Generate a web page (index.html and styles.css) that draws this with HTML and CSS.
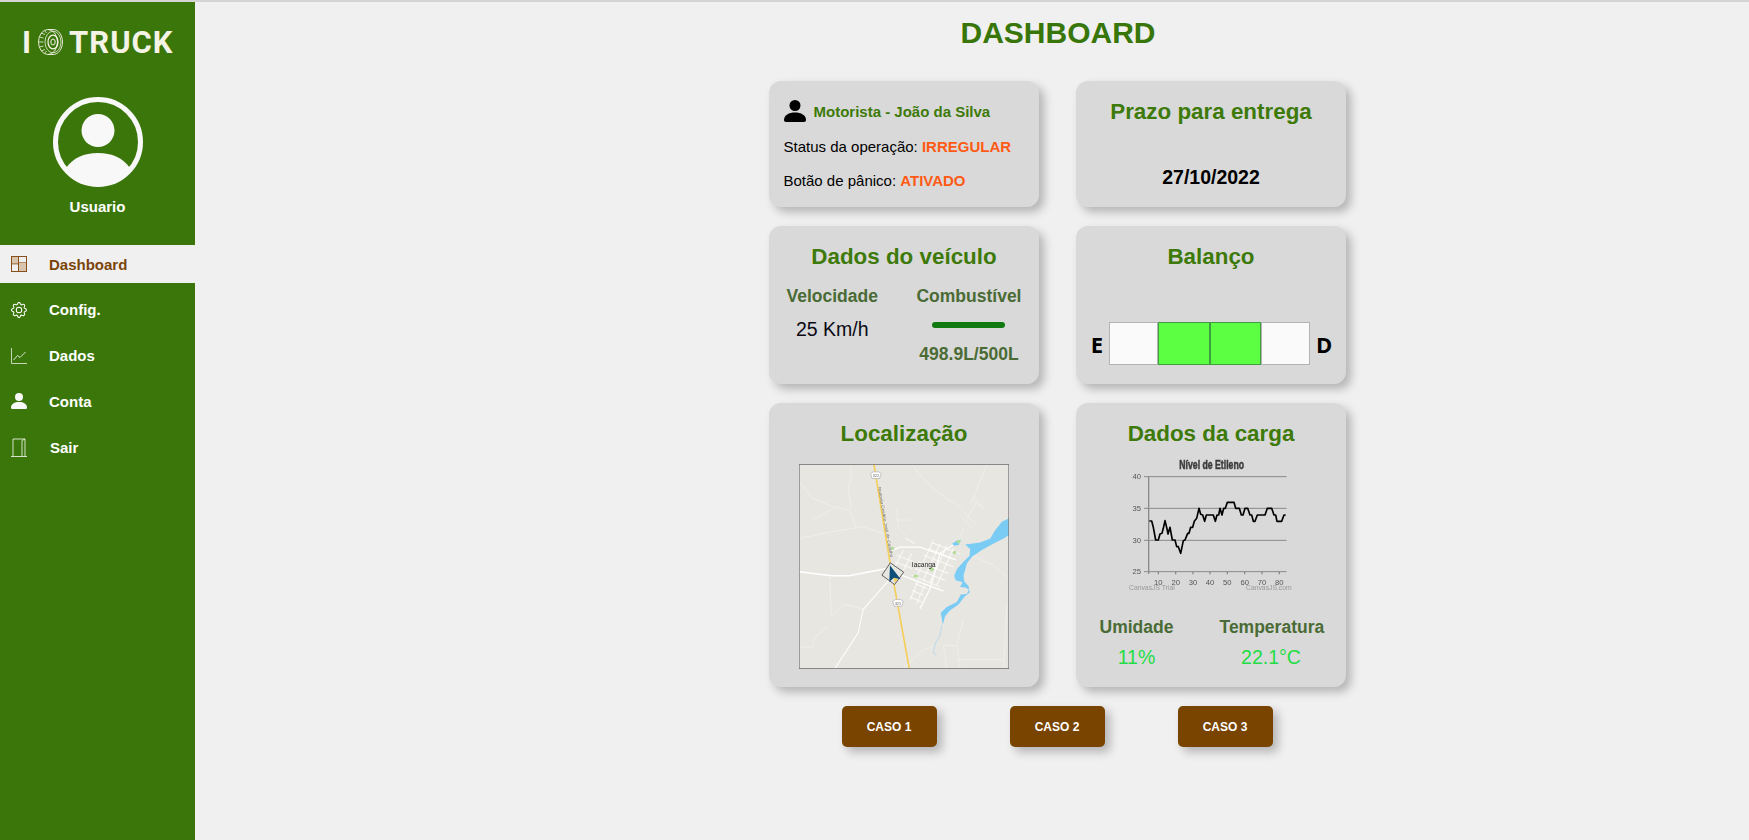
FILE: index.html
```html
<!DOCTYPE html>
<html lang="pt-BR">
<head>
    <meta charset="UTF-8">
    <meta name="viewport" content="width=device-width, initial-scale=1.0">
    <title>IoTruck Dashboard</title>
    <link rel="stylesheet" href="styles.css">
</head>
<body>

    <aside class="sidebar">
        <div class="logo">
            <span>I</span>
            <svg class="logo-tire" viewBox="0 0 25 26" fill="none" stroke="#f5f3e6">
                <ellipse cx="10" cy="13" rx="9.500" ry="12.500" stroke-width=".9"/>
                <path d="M10 .5h5c5.500 0 9.500 5.600 9.500 12.500S20.500 25.500 15 25.500h-5" stroke-width=".9"/>
                <ellipse cx="15" cy="13" rx="8" ry="10.800" stroke-width=".8"/>
                <ellipse cx="15" cy="13" rx="5" ry="6.800" stroke-width="1.300"/>
                <ellipse cx="15" cy="13" rx="2.200" ry="3" stroke-width="1"/>
                <path d="M3 4l4 1.500M1.500 8l4 1M1 13h4.500M1.500 18l4-1M3 22l4-1.500M6.500 1.500l2 2.500M6.500 24.500l2-2.500" stroke-width=".8"/>
            </svg>
            <span class="logo-name">TRUCK</span>
        </div>

        <svg class="avatar" viewBox="0 0 90 90">
            <circle cx="45" cy="45" r="42.500" fill="none" stroke="#f8f8f8" stroke-width="5"/>
            <circle cx="45" cy="33.500" r="16.500" fill="#f8f8f8"/>
            <path d="M13 71c7-10 18-15 32-15s25 5 32 15A42 42 0 0 1 13 71z" fill="#f8f8f8"/>
        </svg>
        <div class="user-name">Usuario</div>

        <nav class="menu">
            <a class="menu-item active">
                <svg class="menu-icon" viewBox="0 0 16 16">
                    <rect x=".5" y=".5" width="15" height="15" fill="#d9c5ad" stroke="#85501c"/>
                    <path d="M7.500 1v14M1 8h6.500M7.500 6H15" stroke="#85501c" fill="none"/>
                    <path d="M8 1h7v5H8zM1 8.500h6V15H1z" fill="#f0f0f0"/>
                </svg>
                <span>Dashboard</span>
            </a>
            <a class="menu-item">
                <svg class="menu-icon" viewBox="0 0 16 16" fill="#fff">
                    <path d="M8 4.754a3.246 3.246 0 1 0 0 6.492 3.246 3.246 0 0 0 0-6.492zM5.754 8a2.246 2.246 0 1 1 4.492 0 2.246 2.246 0 0 1-4.492 0z"/>
                    <path d="M9.796 1.343c-.527-1.79-3.065-1.79-3.592 0l-.094.319a.873.873 0 0 1-1.255.52l-.292-.16c-1.64-.892-3.433.902-2.54 2.541l.159.292a.873.873 0 0 1-.52 1.255l-.319.094c-1.79.527-1.79 3.065 0 3.592l.319.094a.873.873 0 0 1 .52 1.255l-.16.292c-.892 1.64.901 3.434 2.541 2.54l.292-.159a.873.873 0 0 1 1.255.52l.094.319c.527 1.79 3.065 1.79 3.592 0l.094-.319a.873.873 0 0 1 1.255-.52l.292.16c1.64.893 3.434-.902 2.54-2.541l-.159-.292a.873.873 0 0 1 .52-1.255l.319-.094c1.79-.527 1.79-3.065 0-3.592l-.319-.094a.873.873 0 0 1-.52-1.255l.16-.292c.893-1.64-.902-3.433-2.541-2.54l-.292.159a.873.873 0 0 1-1.255-.52l-.094-.319zm-2.633.283c.246-.835 1.428-.835 1.674 0l.094.319a1.873 1.873 0 0 0 2.693 1.115l.291-.16c.764-.415 1.6.42 1.184 1.185l-.159.292a1.873 1.873 0 0 0 1.116 2.692l.318.094c.835.246.835 1.428 0 1.674l-.319.094a1.873 1.873 0 0 0-1.115 2.693l.16.291c.415.764-.42 1.6-1.185 1.184l-.291-.159a1.873 1.873 0 0 0-2.693 1.116l-.094.318c-.246.835-1.428.835-1.674 0l-.094-.319a1.873 1.873 0 0 0-2.692-1.115l-.292.16c-.764.415-1.6-.42-1.184-1.185l.159-.291A1.873 1.873 0 0 0 1.945 8.93l-.319-.094c-.835-.246-.835-1.428 0-1.674l.319-.094A1.873 1.873 0 0 0 3.06 4.377l-.16-.292c-.415-.764.42-1.6 1.185-1.184l.292.159a1.873 1.873 0 0 0 2.692-1.115l.094-.319z"/>
                </svg>
                <span>Config.</span>
            </a>
            <a class="menu-item">
                <svg class="menu-icon" viewBox="0 0 16 16" fill="none" stroke="#e8efe0" stroke-width=".8">
                    <path d="M.5 0v15.500H16"/>
                    <path d="M2.500 12l4-4.500 2.500 2 5.500-5.500" stroke="#fff"/>
                </svg>
                <span>Dados</span>
            </a>
            <a class="menu-item">
                <svg class="menu-icon" viewBox="0 0 16 16" fill="#f8f8f8">
                    <circle cx="8" cy="4" r="4"/>
                    <path d="M0 14.500c0-3.500 3.500-5.500 8-5.500s8 2 8 5.500c0 1-.6 1.500-1.500 1.500h-13C.6 16 0 15.500 0 14.500z"/>
                </svg>
                <span>Conta</span>
            </a>
            <a class="menu-item exit">
                <svg class="menu-icon" viewBox="0 0 16 19" fill="none" stroke="#e8efe0" stroke-width=".9">
                    <path d="M0 18.500h16M2 18.500V1h12v17.500M14 1l-3 1.500v16"/>
                </svg>
                <span>Sair</span>
            </a>
        </nav>
    </aside>

    <main class="content">
        <h1>DASHBOARD</h1>

        <div class="cards">
            <section class="card driver-card">
                <div class="driver-name">
                    <svg class="driver-icon" viewBox="0 0 22 22" fill="#000">
                        <circle cx="11" cy="5.500" r="5.500"/>
                        <path d="M0 20c0-5 5-7.500 11-7.500S22 15 22 20c0 1.200-.8 2-2 2H2c-1.200 0-2-.8-2-2z"/>
                    </svg>
                    <span>Motorista - João da Silva</span>
                </div>
                <p class="driver-line">Status da operação: <b class="alert">IRREGULAR</b></p>
                <p class="driver-line">Botão de pânico: <b class="alert">ATIVADO</b></p>
            </section>

            <section class="card">
                <h2>Prazo para entrega</h2>
                <div class="deadline">27/10/2022</div>
            </section>

            <section class="card">
                <h2>Dados do veículo</h2>
                <div class="stats vehicle-stats">
                    <div class="stat">
                        <h3>Velocidade</h3>
                        <div class="speed">25 Km/h</div>
                    </div>
                    <div class="stat">
                        <h3>Combustível</h3>
                        <div class="fuel-bar"></div>
                        <div class="fuel-value">498.9L/500L</div>
                    </div>
                </div>
            </section>

            <section class="card">
                <h2>Balanço</h2>
                <div class="balance">
                    <span class="balance-side">E</span>
                    <div class="balance-bar">
                        <div class="balance-cell"></div>
                        <div class="balance-cell on"></div>
                        <div class="balance-cell on"></div>
                        <div class="balance-cell"></div>
                    </div>
                    <span class="balance-side">D</span>
                </div>
            </section>

            <section class="card">
                <h2>Localização</h2>
                <svg class="map" viewBox="28 28 628 612">
                    <rect x="28" y="28" width="628" height="612" fill="#e8e6e1"/>
                    <!-- faint side roads -->
                    <g fill="none" stroke="#f1efeb" stroke-width="2.500">
                        <path d="M28 80l40 50 60 25 50 10 20 50M28 250l100-20 90-15 60 20 30 25"/>
                        <path d="M180 28l5 30-10 50 10 50M70 195l60-35M120 362l5 120M125 482l40-35 55 15"/>
                        <path d="M30 575h40l5-30 40-30M365 28l50 60 50 40 50 30M590 28l-20 50-30 70"/>
                        <path d="M320 160l5 60 30 30M320 195h40M640 640l10-200M540 300l70 30 46 40"/>
                        <path d="M470 640l-10-70h40l10 70M500 570l20-80M430 570l-40 20-50 50M500 612h140"/>
                        <path d="M510 180l40 40M520 170l40 40M545 135l40 30M550 125l30 35M520 220l-10 25M530 190l30-50"/>
                    </g>
                    <!-- town grid -->
                    <g fill="none" stroke="#fbfaf8" stroke-width="3">
                        <path d="M425 262l85 35M415 280l85 35M400 300l90 35M385 320l90 35M375 340l90 35M365 360l85 35"/>
                        <path d="M430 255l-50 110M450 265l-50 110M470 272l-50 110M490 280l-50 110"/>
                        <path d="M320 300l50 20M315 320l50 20M340 285l-25 50M365 295l-25 50M345 250l30 15"/>
                        <path d="M375 385l35 15M365 405l35 15M360 425l35 15M385 375l-25 60M405 385l-25 60"/>
                    </g>
                    <!-- main roads -->
                    <g fill="none" stroke="#fff" stroke-linejoin="round">
                        <path d="M28 350l100 12h50l112-22" stroke-width="4.500"/>
                        <path d="M330 358l130 50" stroke-width="4"/>
                        <path d="M300 288l30-12h60l105 38" stroke-width="3.500"/>
                        <path d="M510 265h-15l-45 30-30 105-30 60" stroke-width="3.500"/>
                        <path d="M300 372l-80 90-15 70-70 108" stroke-width="3"/>
                    </g>
                    <!-- lake -->
                    <path d="M656 190l-21 10-20 25-15 25-30 12-45 6 15 14-2 20-18 18-20 22-8 20 5 14 20 4-7 15 15 2 11 6-6 13-18 2-12 22-30 15-18 17 6 36 7-26 15-17 25-17 17-23 16-13-3-20-13-14-2-16 10-37 15-20 30-20 35-20 30-15 16-10z" fill="#7accf5"/>
                    <path d="M486 266l14-10 12-2-6 16-14 2z" fill="#7accf5"/>
                    <path d="M455 510l-5 30-15 25-5 25 8 10" fill="none" stroke="#bcd9e8" stroke-width="3"/>
                    <!-- parks -->
                    <g fill="#b4dd95">
                        <circle cx="308" cy="280" r="5"/>
                        <circle cx="493" cy="292" r="5"/>
                        <circle cx="425" cy="342" r="6"/>
                        <ellipse cx="377" cy="363" rx="8" ry="4"/>
                        <ellipse cx="505" cy="260" rx="6" ry="5"/>
                    </g>
                    <!-- highway -->
                    <path d="M252 28l48 292 58 320" fill="none" stroke="#f5cf5c" stroke-width="5"/>
                    <text class="map-road" transform="translate(264 96) rotate(80)" textLength="214" lengthAdjust="spacingAndGlyphs">Rodovia Cesário José de Castilho</text>
                    <path d="M242 56l8-5h16l8 5-5 15h-22z" fill="#fff" stroke="#aaa" stroke-width="2"/>
                    <path d="M308 438l8-5h16l8 5-5 15h-22z" fill="#fff" stroke="#aaa" stroke-width="2"/>
                    <text class="map-shield" x="258" y="67" text-anchor="middle">321</text>
                    <text class="map-shield" x="324" y="448" text-anchor="middle">321</text>
                    <text class="map-city" x="401" y="336" text-anchor="middle">Iacanga</text>
                    <!-- vehicle marker -->
                    <path d="M301 323l40 28-27 37-38-28z" fill="#e8e6e1" stroke="#444" stroke-width="2.500"/>
                    <path d="M310 366l14 5-10 12z" fill="#f5cf5c"/>
                    <path d="M300 330l32 42-20-4-14 12z" fill="#0d4f78"/>
                    <rect x="28.500" y="28.500" width="627" height="611" fill="none" stroke="#777" stroke-width="3"/>
                </svg>
            </section>

            <section class="card">
                <h2>Dados da carga</h2>
                <svg class="chart" viewBox="0 0 780 450">
                    <text class="chart-title" x="365" y="56" text-anchor="middle" textLength="194" lengthAdjust="spacingAndGlyphs">Nível de Etileno</text>
                    <g stroke="#8a8a8a" stroke-width="3">
                        <path d="M162 80h428M162 175h428M162 271h428M162 365h428"/>
                        <path d="M176 78v294M205 365v8M257 365v8M309 365v8M360 365v8M412 365v8M464 365v8M516 365v8M568 365v8" stroke-width="4"/>
                    </g>
                    <g class="chart-label" text-anchor="end">
                        <text x="153" y="88">40</text>
                        <text x="153" y="183">35</text>
                        <text x="153" y="279">30</text>
                        <text x="153" y="373">25</text>
                    </g>
                    <g class="chart-label" text-anchor="middle">
                        <text x="205" y="406">10</text>
                        <text x="257" y="406">20</text>
                        <text x="309" y="406">30</text>
                        <text x="360" y="406">40</text>
                        <text x="412" y="406">50</text>
                        <text x="464" y="406">60</text>
                        <text x="516" y="406">70</text>
                        <text x="568" y="406">80</text>
                    </g>
                    <text class="chart-credit" x="117" y="420">CanvasJS Trial</text>
                    <text class="chart-credit" x="468" y="420">CanvasJS.com</text>
                    <polyline fill="none" stroke="#000" stroke-width="5" stroke-linejoin="round" points="178,213 185,213 190,232 197,270 205,270 210,252 216,250 220,235 225,212 230,232 234,252 240,232 247,270 255,270 260,290 265,290 272,310 280,272 285,270 293,250 297,250 302,232 308,232 313,214 320,205 327,175 332,193 338,195 344,214 349,195 370,195 376,214 381,195 386,195 390,175 396,195 401,175 406,175 412,157 432,157 437,175 448,175 454,195 459,195 465,175 473,175 480,195 485,195 490,214 495,214 502,195 525,195 532,175 545,175 552,195 557,195 561,214 575,214 582,195 587,195"/>
                </svg>
                <div class="stats cargo-stats">
                    <div class="stat">
                        <h3>Umidade</h3>
                        <div class="cargo-value">11%</div>
                    </div>
                    <div class="stat">
                        <h3>Temperatura</h3>
                        <div class="cargo-value">22.1°C</div>
                    </div>
                </div>
            </section>
        </div>

        <div class="actions">
            <button class="case-btn">CASO 1</button>
            <button class="case-btn">CASO 2</button>
            <button class="case-btn">CASO 3</button>
        </div>
    </main>

</body>
</html>
```

FILE: styles.css
```css
* {
    box-sizing: border-box;
}

body {
    margin: 0;
    height: 100vh;
    display: flex;
    overflow: hidden;
    border-top: 2px solid #d4d4d4;
    background-color: #f0f0f0;
    font-family: "Liberation Sans", Arial, sans-serif;
    color: #000;
}

/* sidebar */
.sidebar {
    width: 195px;
    flex-shrink: 0;
    display: flex;
    flex-direction: column;
    align-items: center;
    padding-top: 27px;
    background-color: #3a760a;
    color: #fff;
}

.logo {
    width: 100%;
    height: 26px;
    display: flex;
    align-items: center;
    padding-left: 22px;
    font-family: Roboto, sans-serif;
    font-size: 31px;
    font-weight: 700;
    color: #f5f3e6;
}

.logo-tire {
    width: 25px;
    height: 26px;
    margin-left: 7px;
    margin-right: 6px;
}

.logo-name {
    letter-spacing: 1px;
}

.avatar {
    width: 90px;
    height: 90px;
    margin-top: 42px;
}

.user-name {
    margin-top: 11px;
    font-size: 15px;
    font-weight: bold;
    line-height: 18px;
}

.menu {
    width: 100%;
    display: flex;
    flex-direction: column;
    gap: 7.8px;
    margin-top: 29px;
}

.menu-item {
    height: 38px;
    display: flex;
    align-items: center;
    gap: 22px;
    padding-left: 11px;
    font-size: 15px;
    font-weight: bold;
    color: #fff;
}

.menu-item.active {
    background-color: #f0f0f0;
    color: #7b4409;
}

.menu-icon {
    width: 16px;
    height: 16px;
    flex-shrink: 0;
}

.exit {
    gap: 23px;
}

.exit .menu-icon {
    height: 19px;
}

/* main area */
.content {
    flex: 1;
    display: flex;
    flex-direction: column;
    align-items: center;
    padding-top: 14px;
    padding-left: 170px;
}

h1 {
    margin: 0 0 31px;
    padding-left: 2px;
    font-size: 30px;
    line-height: 34px;
    color: #38760a;
}

.cards {
    display: grid;
    grid-template-columns: 270px 270px;
    grid-template-rows: 126px 158px 284px;
    column-gap: 37px;
    row-gap: 19px;
}

.card {
    padding-top: 18px;
    border-radius: 12px;
    background-color: #d9d9d9;
    box-shadow: 5px 5px 10px rgba(0, 0, 0, 0.25);
    text-align: center;
}

h2 {
    margin: 0;
    padding-left: 1px;
    font-size: 22.4px;
    line-height: 26px;
    color: #3d7a0a;
}

h3 {
    margin: 0;
    font-size: 17.5px;
    line-height: 20px;
    color: #4a6b35;
}

/* driver card */
.driver-card {
    padding: 19px 0 0 15px;
    text-align: left;
}

.driver-name {
    display: flex;
    align-items: center;
    gap: 8px;
    margin-bottom: 16px;
    font-size: 15px;
    font-weight: bold;
    color: #3d7a0a;
}

.driver-icon {
    width: 22px;
    height: 22px;
}

.driver-line {
    margin: 0 0 17px;
    font-size: 15px;
    line-height: 17px;
}

.alert {
    color: #ff5a14;
}

.deadline {
    margin-top: 41px;
    padding-left: 1px;
    font-size: 19.5px;
    font-weight: bold;
    line-height: 22px;
}

/* shared two column stats */
.stats {
    display: flex;
}

.vehicle-stats {
    justify-content: space-between;
    margin-top: 16px;
    padding: 0 17px 0 18px;
}

.speed {
    margin-top: 12px;
    font-size: 19.5px;
    line-height: 22px;
    color: #0a0a14;
}

.fuel-bar {
    width: 73px;
    height: 6px;
    margin: 16px auto 0;
    border-radius: 3px;
    background-color: #107a10;
}

.fuel-value {
    margin-top: 16px;
    font-size: 17.5px;
    font-weight: bold;
    line-height: 20px;
    color: #4a6b35;
}

/* balance */
.balance {
    display: flex;
    align-items: center;
    justify-content: center;
    gap: 6px;
    margin-top: 52px;
    padding-left: 2px;
}

.balance-side {
    font-family: "Open Sans", sans-serif;
    font-size: 22px;
    font-weight: 700;
    line-height: 24px;
}

.balance-bar {
    width: 201px;
    height: 43px;
    display: grid;
    grid-template-columns: 49px 52px 51px 49px;
}

.balance-cell {
    border: 1px solid #b3b3b3;
    background-color: #fafafa;
}

.balance-cell.on {
    border-color: #3f9e3f;
    background-color: #5cff42;
}

/* map */
.map {
    display: block;
    width: 210px;
    height: 205px;
    margin: 17px auto 0;
    filter: blur(0.4px);
}

.map-road {
    font-size: 12px;
    fill: #666;
}

.map-shield {
    font-size: 11px;
    fill: #555;
}

.map-city {
    font-size: 20px;
    fill: #222;
}

/* chart */
.chart {
    display: block;
    width: 260px;
    height: 150px;
    margin: 3px auto 0 14px;
    filter: blur(0.25px);
}

.chart-title {
    font-size: 36px;
    font-weight: bold;
    fill: #3c3c3c;
    stroke: #3c3c3c;
    stroke-width: 1.5px;
}

.chart-label {
    font-size: 23px;
    fill: #555;
}

.chart-credit {
    font-size: 20.4px;
    fill: #999;
}

.cargo-stats {
    margin-top: 17px;
    padding-left: 24px;
}

.cargo-stats .stat:first-child {
    width: 74px;
}

.cargo-stats .stat:last-child {
    width: 103px;
    margin-left: 46px;
}

.cargo-stats .stat h3 {
    white-space: nowrap;
}

.cargo-value {
    margin-top: 9px;
    font-size: 19.5px;
    line-height: 22px;
    color: #22dd44;
}

/* buttons */
.actions {
    display: flex;
    gap: 73px;
    margin-top: 19px;
}

.case-btn {
    width: 95px;
    height: 41px;
    border: none;
    border-radius: 5px;
    background-color: #784400;
    box-shadow: 5px 5px 10px rgba(0, 0, 0, 0.25);
    font-family: inherit;
    font-size: 12px;
    font-weight: bold;
    color: #fff;
}
```
